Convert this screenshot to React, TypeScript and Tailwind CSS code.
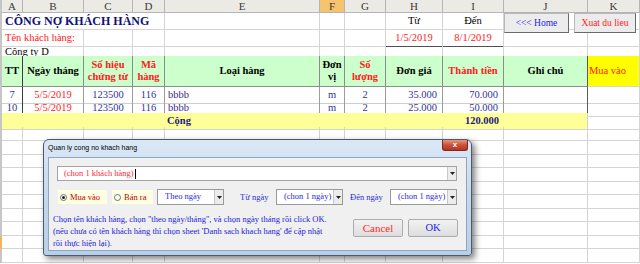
import type { ReactNode } from "react";
import { twMerge } from "tailwind-merge";

const COLS =
  "grid grid-cols-[2px_21px_61px_49px_32px_155px_25px_41px_57px_61px_84px_52px]";

function Cell({ className = "", children }: { className?: string; children?: ReactNode }) {
  return (
    <div
      className={twMerge(
        "flex min-w-0 items-center whitespace-nowrap border-b border-r border-[#d4d4d4]",
        className
      )}
    >
      {children}
    </div>
  );
}

function Row({ h, sel, children }: { h: string; sel?: boolean; children: ReactNode }) {
  return (
    <div className={`${COLS} ${h}`}>
      <div className={sel ? "bg-[#f4b45a]" : "bg-[#c6c6c6]"} />
      {children}
    </div>
  );
}

const blanks = (n: number, cls = "") =>
  Array.from({ length: n }, (_, i) => <Cell key={i} className={cls} />);

// bordes de la tabla
const TD = "border-r-[#9c9c9c] border-b-[#cdcdcd] text-[#333399]";
const TH =
  "justify-center whitespace-normal border-r-[#8c8c8c] border-b-[#8c8c8c] bg-[#ccffcc] text-center font-bold leading-[12px]";

function Arrow() {
  return (
    <span className="flex w-[9px] items-center justify-center self-stretch border-l border-[#c8c8c8] bg-[#ececec]">
      <svg width="5" height="3" viewBox="0 0 5 3">
        <path d="M0 0h5L2.5 3z" fill="#222" />
      </svg>
    </span>
  );
}

function Combo({ w, text, cls }: { w: string; text: string; cls: string }) {
  return (
    <div className={`flex h-[16px] ${w} border border-[#9a9a9a] bg-white`}>
      <span className={`flex-1 whitespace-nowrap pl-[7px] pt-[1px] leading-[10px] ${cls}`}>
        {text}
      </span>
      <Arrow />
    </div>
  );
}

function Radio({ label, on, w }: { label: string; on?: boolean; w: string }) {
  return (
    <div className={`flex h-[14px] ${w} items-center gap-[3px] bg-[#ffffe1] pl-[2px] text-[#c00000]`}>
      <span className="flex h-[7px] w-[7px] items-center justify-center rounded-full border border-[#6f6f6f] bg-white">
        {on && <span className="h-[3px] w-[3px] rounded-full bg-[#222]" />}
      </span>
      {label}
    </div>
  );
}

function DlgBtn({ children, cls }: { children: ReactNode; cls: string }) {
  return (
    <button
      type="button"
      className={`flex h-[18px] w-[50px] items-center justify-center rounded-[2px] border border-[#acacac] bg-gradient-to-b from-[#f2f2f2] to-[#dedede] text-[10.5px] ${cls}`}
    >
      {children}
    </button>
  );
}

export default function App() {
  const letters = ["A", "B", "C", "D", "E", "F", "G", "H", "I", "J", "K"];
  const empties = [
    "h-[14px]",
    "h-[14px]",
    "h-[13px]",
    "h-[14px]",
    "h-[13px]",
    "h-[14px]",
    "h-[13px]",
    "h-[14px]",
    "h-[13px]",
    "h-[14px]",
  ];

  return (
    <div className="relative h-[264px] w-[640px] overflow-hidden bg-white font-['Liberation_Serif','Times_New_Roman',serif] text-[10.5px] text-black">
      {/* cabecera de columnas */}
      <Row h="h-[13px]">
        {letters.map((l) => (
          <Cell
            key={l}
            className={`justify-center border-[#b5b5b5] text-[11px] leading-none text-[#3a3a3a] ${
              l === "F" ? "bg-[#f6c46f]" : "bg-[#eceae4]"
            }`}
          >
            {l}
          </Cell>
        ))}
      </Row>

      {/* fila 1 */}
      <Row h="h-[17px]">
        <Cell className="col-span-4 items-end pb-[1px] pl-[3px] text-[12px] font-bold leading-[14px] text-[#10107a]">
          CÔNG NỢ KHÁCH HÀNG
        </Cell>
        <Cell />
        <Cell />
        <Cell />
        <Cell className="justify-center">Từ</Cell>
        <Cell className="justify-center">Đến</Cell>
        <Cell />
        <Cell />
      </Row>

      {/* fila 2 */}
      <Row h="h-[14px]">
        <Cell className="col-span-2 pl-[3px] text-[#ff2020]">Tên khách hàng:</Cell>
        <Cell />
        <Cell />
        <Cell />
        <Cell />
        <Cell />
        <Cell className="justify-center border-b-[#505050] text-[#ff2020]">1/5/2019</Cell>
        <Cell className="justify-center border-b-[#505050] text-[#ff2020]">8/1/2019</Cell>
        <Cell />
        <Cell />
      </Row>

      {/* fila 3 */}
      <Row h="h-[12px]">
        <Cell className="col-span-2 border-b-[#8c8c8c] pl-[3px]">Công ty D</Cell>
        {blanks(8, "border-b-[#8c8c8c]")}
        <Cell />
      </Row>

      {/* encabezado de tabla */}
      <Row h="h-[31px]">
        <Cell className={`${TH} border-r-[#3c3c3c]`}>TT</Cell>
        <Cell className={TH}>Ngày tháng</Cell>
        <Cell className={`${TH} text-[#ff2020]`}>
          Số hiệu
          <br />
          chứng từ
        </Cell>
        <Cell className={`${TH} text-[#ff2020]`}>
          Mã
          <br />
          hàng
        </Cell>
        <Cell className={TH}>Loại hàng</Cell>
        <Cell className={TH}>
          Đơn
          <br />
          vị
        </Cell>
        <Cell className={`${TH} text-[#ff2020]`}>
          Số
          <br />
          lượng
        </Cell>
        <Cell className={TH}>Đơn giá</Cell>
        <Cell className={`${TH} text-[#ff2020]`}>Thành tiền</Cell>
        <Cell className={`${TH} border-r-[#5a5a5a]`}>Ghi chú</Cell>
        <Cell className="bg-[#ffff00] pl-[1px] text-[#ff2020]">Mua vào</Cell>
      </Row>

      {/* datos */}
      {[
        { tt: "7", dg: "35.000", tt2: "70.000" },
        { tt: "10", dg: "25.000", tt2: "50.000" },
      ].map((r) => (
        <Row key={r.tt} h="h-[13px]">
          <Cell className={`${TD} justify-center border-r-[#3c3c3c]`}>{r.tt}</Cell>
          <Cell className={`${TD} justify-center text-[#ff2020]`}>5/5/2019</Cell>
          <Cell className={`${TD} justify-center`}>123500</Cell>
          <Cell className={`${TD} justify-center`}>116</Cell>
          <Cell className={`${TD} pl-[3px] text-[#3b1f8f]`}>bbbb</Cell>
          <Cell className={`${TD} justify-center`}>m</Cell>
          <Cell className={`${TD} justify-center`}>2</Cell>
          <Cell className={`${TD} justify-end pr-[5px]`}>{r.dg}</Cell>
          <Cell className={`${TD} justify-end pr-[5px]`}>{r.tt2}</Cell>
          <Cell className={`${TD} border-r-[#5a5a5a]`} />
          <Cell />
        </Row>
      ))}

      {/* Cộng */}
      <Row h="h-[14px]">
        <Cell className="col-span-8 border-r-transparent bg-[#ffff99] pl-[165px] font-bold text-[#1c1c7c]">
          Cộng
        </Cell>
        <Cell className="justify-end border-r-transparent bg-[#ffff99] pr-[4px] font-bold text-[#1c1c7c]">
          120.000
        </Cell>
        <Cell className="bg-[#ffff99]" />
        <Cell />
      </Row>

      {empties.map((h, i) => (
        <Row key={i} h={h} sel={i === 8}>
          {blanks(11)}
        </Row>
      ))}

      {/* botones de la hoja */}
      <button
        type="button"
        className="absolute left-[504px] top-[13px] flex h-[20px] w-[65px] items-center justify-center border border-[#b8b8b8] border-b-[#6a6a6a] border-r-[#6a6a6a] bg-[#ececec] text-[9.5px] text-[#2222ee]"
      >
        &lt;&lt;&lt; Home
      </button>
      <button
        type="button"
        className="absolute left-[574px] top-[13px] flex h-[20px] w-[62px] items-center justify-center border border-[#b8b8b8] border-b-[#6a6a6a] border-r-[#6a6a6a] bg-[#ececec] text-[9.5px] text-[#ff1a1a]"
      >
        Xuat du lieu
      </button>

      {/* diálogo */}
      <div className="absolute left-[43px] top-[139px] flex h-[117px] w-[429px] flex-col rounded-t-[6px] rounded-b-[3px] border border-[#4d5a6a] bg-gradient-to-b from-[#dbe8f6] via-[#c4d8ee] to-[#b7cfe9] shadow-[3px_3px_6px_rgba(0,0,0,0.5)]">
        <div className="flex h-[17px] pl-[4px]">
          <span className="self-center font-['Liberation_Sans',Arial,sans-serif] text-[7px] text-black">
            Quan ly cong no khach hang
          </span>
          <span className="ml-auto mr-[3px] flex h-[11px] w-[26px] items-center justify-center rounded-b-[3px] border border-t-0 border-[#7a2a20] bg-gradient-to-b from-[#e6957f] via-[#c9503a] to-[#b8321f] font-['Liberation_Sans',sans-serif] text-[8px] font-bold leading-none text-white">
            x
          </span>
        </div>
        <div className="mx-[4px] mb-[4px] flex flex-1 flex-col border border-[#8fa5c0] bg-[#f0f0f0] pl-[4px] pt-[8px] text-[8.5px]">
          <div className="ml-[4px] flex h-[15px] w-[400px] border border-[#a4a4a4] bg-white">
            <span className="flex flex-1 items-center pl-[6px] text-[#ff2a3a]">
              (chon 1 khách hàng)
              <span className="ml-[1px] h-[10px] w-px bg-black" />
            </span>
            <Arrow />
          </div>

          <div className="mt-[8px] flex items-center">
            <div className="ml-[5px]">
              <Radio label="Mua vào" on w="w-[49px]" />
            </div>
            <div className="ml-[5px]">
              <Radio label="Bán ra" w="w-[41px]" />
            </div>
            <div className="ml-[4px]">
              <Combo w="w-[67px]" text="Theo ngày" cls="text-[#2a2ae0]" />
            </div>
            <span className="ml-[16px] w-[36px] text-[#2a2ae0]">Từ ngày</span>
            <Combo w="w-[67px]" text="(chon 1 ngày)" cls="text-[#2a2ae0]" />
            <span className="ml-[7px] w-[40px] text-[#2a2ae0]">Đến ngày</span>
            <Combo w="w-[67px]" text="(chon 1 ngày)" cls="text-[#2a2ae0]" />
          </div>

          <div className="mt-[8px] flex">
            <p className="w-[300px] whitespace-nowrap leading-[12px] text-[#2323d6]">
              Chọn tên khách hàng, chọn "theo ngày/tháng", và chọn ngày tháng rồi click OK.
              <br />
              (nếu chưa có tên khách hàng thì chọn sheet 'Danh sach khach hang' để cập nhật
              <br />
              rồi thực hiện lại).
            </p>
            <div className="mt-[6px] flex gap-[5px]">
              <DlgBtn cls="text-[11px] text-[#ff2a2a]">Cancel</DlgBtn>
              <DlgBtn cls="text-[#2222ee]">OK</DlgBtn>
            </div>
          </div>
        </div>
      </div>
    </div>
  );
}
